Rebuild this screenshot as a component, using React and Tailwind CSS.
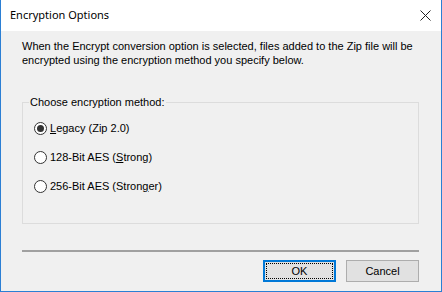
export default function App() {
  const font = { fontFamily: '"Noto Sans","Open Sans",sans-serif' };
  const body = { fontFamily: '"Liberation Sans",Arial,sans-serif' };
  const Radio = ({ checked, children }) => (
    <div className="flex items-center h-[14px]">
      <span className="w-[13px] h-[13px] rounded-full border border-[#333] bg-white flex items-center justify-center shrink-0">
        {checked && <span className="w-[7px] h-[7px] rounded-full bg-[#333]" />}
      </span>
      <span className="ml-[3px] text-[11px] leading-[14px] text-black">{children}</span>
    </div>
  );
  return (
    <div style={font} className="w-[442px] h-[292px] flex flex-col border-x border-b border-[#2b7fd4] bg-[#f0f0f0] overflow-hidden">
      <div className="h-[31px] bg-white flex items-center justify-between pl-[9px] pr-[9px] shrink-0">
        <span className="text-[11px] text-black">Encryption Options</span>
        <svg width="11" height="11" viewBox="0 0 11 11" className="mr-[1px]">
          <path d="M0.5 0.5 L10.5 10.5 M10.5 0.5 L0.5 10.5" stroke="#222" strokeWidth="1" />
        </svg>
      </div>
      <div style={body} className="flex-1 flex flex-col pl-[21px] pr-[22px]">
        <p className="mt-[8px] text-[11px] leading-[14px] text-black">
          When the Encrypt conversion option is selected, files added to the Zip file will be encrypted using the encryption method you specify below.
        </p>
        <fieldset className="mt-[28px] h-[129px] border border-[#dcdcdc] pl-[11px] pt-0 m-0">
          <legend className="-ml-[5px] px-[1px] text-[11px] leading-[14px] text-black">Choose encryption method:</legend>
          <div className="flex flex-col gap-[15px] mt-[12px]">
            <Radio checked><span className="underline">L</span>egacy (Zip 2.0)</Radio>
            <Radio>128-Bit AES (<span className="underline">S</span>trong)</Radio>
            <Radio>256-Bit AES (Stron<span className="underline">g</span>er)</Radio>
          </div>
        </fieldset>
        <div className="mt-[26px] h-[2px] bg-[#a0a0a0]" />
        <div className="mt-[8px] flex justify-end gap-[10px]">
          <button className="w-[73px] h-[22px] border-2 border-[#0078d7] bg-[#e1e1e1] p-[1px] text-[11px] text-black">
            <span className="w-full h-full flex items-center justify-center border border-dotted border-black">OK</span>
          </button>
          <button className="w-[73px] h-[22px] border border-[#adadad] bg-[#e1e1e1] text-[11px] text-black flex items-center justify-center">
            Cancel
          </button>
        </div>
      </div>
    </div>
  );
}
